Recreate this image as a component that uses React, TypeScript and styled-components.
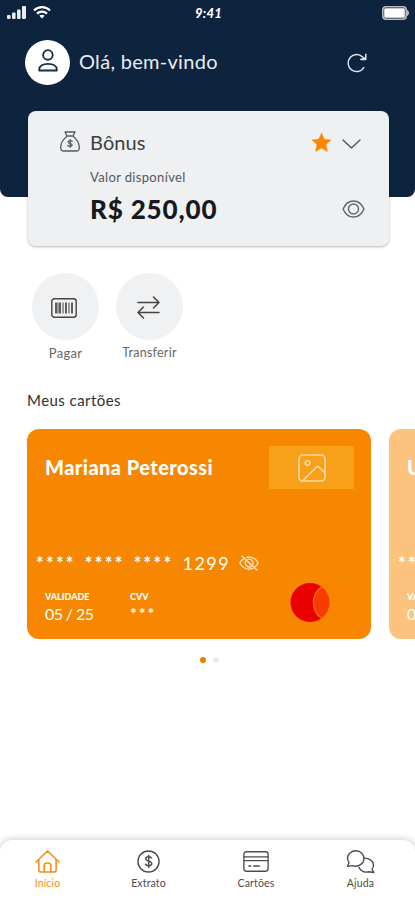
import React from 'react';
import styled, { createGlobalStyle } from 'styled-components';

const Global = createGlobalStyle`
  * { box-sizing: border-box; }
  body { margin: 0; background: #fff; font-family: Lato, "Open Sans", sans-serif; }
  svg { display: block; flex: none; overflow: visible; }
`;

const Screen = styled.main`
  width: 415px; height: 900px; overflow: hidden;
  display: flex; flex-direction: column; background: #fff;
`;
const Header = styled.header`
  height: 197px; flex: none; background: #0d233e; border-radius: 0 0 8px 8px; color: #fff;
`;
const StatusBar = styled.div`
  height: 24px; padding: 0 5px 2px 7px;
  display: grid; grid-template-columns: 1fr auto 1fr; align-items: center;
`;
const Signals = styled.div`display: flex; align-items: center; gap: 7px;`;
const Clock = styled.span`
  font: italic 900 13px/24px Lato, sans-serif; letter-spacing: .3px; padding-top: 1px;
`;
const Battery = styled.div`justify-self: end;`;
const Greeting = styled.div`
  display: flex; align-items: center; height: 45px; margin-top: 16px; padding: 0 48px 0 25px;
`;
const Avatar = styled.div`
  width: 45px; height: 45px; border-radius: 50%; background: #fff;
  display: grid; place-items: center; padding: 0 0 4px 1px; margin-right: 9px;
`;

const Label = styled.span<{ $size: number; $lh?: number; $weight?: number; $color?: string; $track?: number }>`
  font-size: ${p => p.$size}px;
  line-height: ${p => p.$lh ?? p.$size + 4}px;
  font-weight: ${p => p.$weight ?? 400};
  color: ${p => p.$color ?? 'inherit'};
  letter-spacing: ${p => p.$track ?? 0}px;
  white-space: nowrap; display: block;
`;
const Welcome = styled(Label)`padding-bottom: 3px;`;
const Spacer = styled.div`flex: 1;`;

const Bonus = styled.section`
  width: 361px; height: 135px; flex: none; margin: -86px 0 0 28px; padding: 18px 24px 0 32px;
  background: #eef0f2; border-radius: 8px; box-shadow: 0 1px 3px rgba(0,0,0,.28);
  display: grid; grid-template-columns: 30px 1fr; grid-template-rows: 26px 45px 18px; align-content: start;
`;
const BonusRow = styled.div`
  display: flex; align-items: center; grid-column: 2;
`;
const BagWrap = styled.div`padding-top: 2px;`;
const StarWrap = styled.div`margin-right: 11px;`;
const ChevronWrap = styled.div`margin: 3px 4px 0 0;`;

const Actions = styled.section`display: flex; gap: 17px; margin: 27px 0 0 32px;`;
const Action = styled.div`
  width: 67px; display: flex; flex-direction: column; align-items: center; gap: 5px;
`;
const Disc = styled.div`
  width: 67px; height: 67px; border-radius: 50%; background: #f0f1f3; display: grid; place-items: center;
  padding: 2px 3px 0 0;
`;
const SectionTitle = styled.h2`
  margin: 29px 0 0 27px; font-size: 15px; line-height: 20px; font-weight: 400; color: #303030; letter-spacing: .45px;
`;
const Carousel = styled.section`display: flex; gap: 18px; margin: 19px 0 0 27px; flex: none;`;
const Card = styled.article<{ $faded?: boolean }>`
  width: 344px; height: 210px; flex: none; border-radius: 12px; color: #fff;
  background: ${p => (p.$faded ? '#fbc37d' : '#f78600')};
  display: flex; flex-direction: column;
`;
const CardTop = styled.div`
  display: flex; justify-content: space-between; height: 43px; margin: 17px 17px 0 18px;
`;
const Picture = styled.div`
  width: 85px; height: 43px; background: #f9a01b; display: grid; place-items: center;
`;
const NumberRow = styled.div`
  display: flex; align-items: center; gap: 9px; height: 20px; margin: 64px 0 0 9px;
`;
const Stars = styled.span<{ $size?: number; $track?: number }>`
  display: block; font-size: ${p => p.$size ?? 18}px; line-height: 20px; height: 20px;
  letter-spacing: ${p => p.$track ?? 2}px; white-space: nowrap; font-weight: 700;
`;
const StarGroups = styled.div`display: flex; gap: 9px;`;
const CardBottom = styled.div`
  display: flex; height: 40px; margin: 10px 0 0 18px;
`;
const Field = styled.div<{ $width: number }>`width: ${p => p.$width}px; padding-top: 8px;`;
const Dots = styled.div`display: flex; gap: 7px; margin: 18px 0 0 200px;`;
const Dot = styled.i<{ $on?: boolean }>`
  width: 6px; height: 6px; border-radius: 50%; background: ${p => (p.$on ? '#f57c00' : '#eeeeee')};
`;
const Nav = styled.nav`
  height: 60px; margin-top: auto; flex: none; background: #fff; border-radius: 12px 12px 0 0;
  box-shadow: 0 -1px 7px rgba(0,0,0,.2); padding: 9px 4px 0 0;
  display: grid; grid-template-columns: 95px 107px 108px 101px;
`;
const Tab = styled.div<{ $active?: boolean }>`
  display: flex; flex-direction: column; align-items: center;
  color: ${p => (p.$active ? '#f98a16' : '#4c4c4c')};
`;
const TabIcon = styled.div`height: 24px; display: grid; place-items: center; margin-bottom: 3px;`;

const line = { fill: 'none', stroke: 'currentColor', strokeLinecap: 'round', strokeLinejoin: 'round' } as const;

const SignalIcon = () => (
  <svg width="19" height="13" fill="#e8ebef">
    <rect x="0" y="9" width="3.6" height="4" rx="1" /><rect x="5" y="6.5" width="3.6" height="6.5" rx="1" />
    <rect x="10" y="3.5" width="3.6" height="9.5" rx="1" /><rect x="15" y="0" width="4" height="13" rx="1" />
  </svg>
);
const WifiIcon = () => (
  <svg width="18" height="13" viewBox="0 0 18 13" fill="none" stroke="#fff" strokeWidth="2.2">
    <path d="M1 4.5C5.5.1 12.5.1 17 4.5" /><path d="M4 7.6c2.8-2.7 7.2-2.7 10 0" />
    <path d="M6.3 9.7c1.6-1.4 3.8-1.4 5.4 0L9 12.5z" fill="#fff" stroke="none" />
  </svg>
);
const BatteryIcon = () => (
  <svg width="28" height="14" viewBox="0 0 28 14">
    <rect x=".8" y=".8" width="23.4" height="12.4" rx="3.2" fill="none" stroke="#b9bbbd" strokeWidth="1.6" />
    <rect x="2.2" y="2.2" width="20.6" height="9.6" rx="1.2" fill="#fff" />
    <path d="M25.5 4.5q2.5 2.5 0 5z" fill="#b9bbbd" stroke="#b9bbbd" />
  </svg>
);
const UserIcon = () => (
  <svg width="20" height="23" viewBox="0 0 21 24" {...line} stroke="#172b45" strokeWidth="1.9">
    <circle cx="10.4" cy="6.2" r="5" /><path d="M1.3 22.5v-1.2c0-3.600 4-5.800 9.200-5.800s9.200 2.200 9.200 5.800v1.200z" />
  </svg>
);
const RefreshIcon = () => (
  <svg width="20" height="20" viewBox="0 0 20 20" {...line} stroke="#e1e4e8" strokeWidth="1.5">
    <path d="M16.800 14.600A8.500 8.500 0 1 1 15.600 4l2.400 2" /><path d="M18.800 1.200v5.300h-5l5-1.500" />
  </svg>
);
const BagIcon = () => (
  <svg width="20" height="21" viewBox="0 0 20 21" {...line} stroke="#555b60" strokeWidth="1.3">
    <path d="M5 1h10l-2 4H7zM6.5 5.2h7M7 5.2C3.6 7.8.7 11.8.7 16.4c0 2.5 1.2 3.6 3.2 3.6h12.2c2 0 3.2-1.1 3.2-3.6 0-4.6-2.9-8.6-6.3-11.2" />
    <path d="M12.3 10.3c-.8-1-3.9-1.2-4.2.5-.3 2 4.2 1.2 4 3.3-.2 1.7-3.3 1.7-4.4.3M10.2 8.600v7.600" />
  </svg>
);
const StarIcon = () => (
  <svg width="19" height="19" viewBox="0 0 20 20" fill="#ff8500"><path d="M10 0l2.900 6.500 7.100.8-5.300 4.800 1.600 7.400L10 15.900l-6.300 3.600 1.600-7.400L0 7.300l7.100-.8z" stroke="#ff8500" strokeWidth=".5" strokeLinejoin="round" /></svg>
);
const ChevronIcon = () => (
  <svg width="19" height="10" viewBox="0 0 19 10" {...line} stroke="#555" strokeWidth="1.4"><path d="M1 1l8.500 8L18 1" /></svg>
);
const EyeIcon = () => (
  <svg width="23" height="18" viewBox="0 0 24 19" {...line} stroke="#64686c" strokeWidth="1.5">
    <path d="M1 9.500C3.200 4.300 7.200 1 12 1s8.800 3.300 11 8.500C20.800 14.700 16.800 18 12 18S3.200 14.700 1 9.500z" /><circle cx="12" cy="9.500" r="5.300" />
  </svg>
);
const BarcodeIcon = () => (
  <svg width="26" height="20" viewBox="0 0 26 20" {...line} stroke="#454545" strokeWidth="1.4">
    <rect x=".8" y=".8" width="24.400" height="18.400" rx="2.500" />
    <g strokeLinecap="butt"><path d="M5 4.500v11M9 4.500v11M15 4.500v11M21 4.500v11" strokeWidth="1.700" /><path d="M7 4.500v11M12 4.500v11M18 4.500v11" strokeWidth="1" /></g>
  </svg>
);
const SwapIcon = () => (
  <svg width="23" height="23" viewBox="0 0 23 23" {...line} stroke="#444" strokeWidth="1.5">
    <path d="M1 6.500h21M16.500 1l5.500 5.500-5.500 5.500M22 16.500H1M6.500 11L1 16.500 6.500 22" />
  </svg>
);
const ImageIcon = () => (
  <svg width="28" height="28" viewBox="0 0 28 28" {...line} stroke="#fcd8a4" strokeWidth="1.700">
    <rect x="1" y="1" width="26" height="26" rx="3.500" /><circle cx="9.500" cy="9" r="2.300" /><path d="M5 26.500L18.500 13q1.200-1 2.400.1L27 19" />
  </svg>
);
const EyeOffIcon = () => (
  <svg width="20" height="16" viewBox="0 0 21 17" {...line} stroke="#ffe3bd" strokeWidth="1.500">
    <path d="M5.600 3.500C3.600 4.500 2 6.200.8 8.500 3 12.800 6.300 15 10.500 15c1.700 0 3.200-.4 4.500-1M8 2.400c5.400-1.200 9.700 1.400 12.200 6.100-.8 1.500-1.800 2.700-2.900 3.700" />
    <path d="M3 1l16 15M7 6.200a4.500 4.500 0 0 0 6 6M9.200 4.600a4.300 4.300 0 0 1 5.400 5.300M9.500 7.500l3 2.800" />
  </svg>
);
const BrandIcon = () => (
  <svg width="65" height="40" viewBox="0 0 65 40">
    <circle cx="20" cy="19.500" r="19.500" fill="#eb0000" /><circle cx="43" cy="19.500" r="19.500" fill="#fa8300" />
    <path d="M31.500 3.700A19.500 19.500 0 0 1 31.500 35.300 19.500 19.500 0 0 1 31.500 3.700z" fill="#f83c00" />
    <path d="M31.500 3.700A19.500 19.500 0 0 0 31.500 35.300" fill="none" stroke="#fc6e16" strokeWidth="1.300" />
  </svg>
);
const HomeIcon = () => (
  <svg width="25" height="23" viewBox="0 0 26 24" {...line} strokeWidth="1.600">
    <path d="M1 12.500L13 1l12 11.500M4 10v10.500Q4 23 6.500 23h13q2.500 0 2.500-2.500V10M9.500 22.500V16q0-2.500 3.500-2.500t3.500 2.500v6.500" />
  </svg>
);
const MoneyIcon = () => (
  <svg width="23" height="23" viewBox="0 0 24 24" {...line} strokeWidth="1.500">
    <circle cx="12" cy="12" r="11" /><path d="M15.200 8.300c-.7-1.700-6-1.900-6 .8 0 3.200 6.200 1.700 6.200 5 0 2.900-5.300 2.900-6.600.7M12.200 5.600v12.700" />
  </svg>
);
const CardIcon = () => (
  <svg width="26" height="21" viewBox="0 0 27 22" {...line} strokeWidth="1.400">
    <rect x=".8" y=".8" width="25.400" height="20.400" rx="2.500" /><path d="M1 6.200h25M1 10h25M6 15.700h2M11 15.700h6" />
  </svg>
);
const ChatIcon = () => (
  <svg width="29" height="23" viewBox="0 0 30 24" {...line} strokeWidth="1.400">
    <path d="M6.500 16.300c2.700 1 6.300.5 8.600-1 4.200-2.700 4.700-8.500 1.200-12C13.100 0 7.500 0 4 3.100 1 5.800.7 9.500 3 13l-1.600 4z" />
    <path d="M19.300 8.500c4.500-.1 8.700 2.800 9.200 6.600.3 2-.2 3.600-1.500 5.100L29 23.500l-5.200-.8c-4.500 1.300-9-.8-10.400-4.800" />
  </svg>
);

function BankCard({ name, faded }: { name: string; faded?: boolean }) {
  return (
    <Card $faded={faded}>
      <CardTop>
        <Label $size={20} $lh={43} $weight={900} $track={0.42}>{name}</Label>
        <Picture><ImageIcon /></Picture>
      </CardTop>
      <NumberRow>
        <StarGroups><Stars $track={2.3}>****</Stars><Stars $track={2.3}>****</Stars><Stars $track={2.3}>****</Stars></StarGroups>
        <Label $size={18} $lh={20} $track={1.5}>1299</Label>
        <EyeOffIcon />
      </NumberRow>
      <CardBottom>
        <Field $width={85}>
          <Label $size={9} $lh={12} $weight={900}>VALIDADE</Label>
          <Label $size={16} $lh={22} $track={-0.6}>05 / 25</Label>
        </Field>
        <Field $width={160}>
          <Label $size={9} $lh={12} $weight={900}>CVV</Label>
          <Stars $size={16}>***</Stars>
        </Field>
        <BrandIcon />
      </CardBottom>
    </Card>
  );
}

const tabs = [
  { label: 'Início', Icon: HomeIcon },
  { label: 'Extrato', Icon: MoneyIcon },
  { label: 'Cartões', Icon: CardIcon },
  { label: 'Ajuda', Icon: ChatIcon },
];

export default function App() {
  return (
    <Screen>
      <Global />
      <Header>
        <StatusBar>
          <Signals><SignalIcon /><WifiIcon /></Signals>
          <Clock>9:41</Clock>
          <Battery><BatteryIcon /></Battery>
        </StatusBar>
        <Greeting>
          <Avatar><UserIcon /></Avatar>
          <Welcome $size={20} $track={0.3} $color="#e8ecf1">Olá, bem-vindo</Welcome>
          <Spacer />
          <RefreshIcon />
        </Greeting>
      </Header>
      <Bonus>
        <BagWrap><BagIcon /></BagWrap>
        <BonusRow>
          <Label $size={20} $lh={26} $color="#3c4043" $track={0.1}>Bônus</Label>
          <Spacer />
          <StarWrap><StarIcon /></StarWrap>
          <ChevronWrap><ChevronIcon /></ChevronWrap>
        </BonusRow>
        <BonusRow><Label $size={13} $color="#55585b" $track={0.35}>Valor disponível</Label></BonusRow>
        <BonusRow>
          <Label $size={26} $lh={34} $weight={900} $color="#171a1c" $track={0.85}>R$ 250,00</Label>
          <Spacer />
          <EyeIcon />
        </BonusRow>
      </Bonus>
      <Actions>
        <Action><Disc><BarcodeIcon /></Disc><Label $size={13} $lh={16} $color="#666" $track={0.3}>Pagar</Label></Action>
        <Action><Disc><SwapIcon /></Disc><Label $size={12.5} $lh={16} $color="#666" $track={0.25}>Transferir</Label></Action>
      </Actions>
      <SectionTitle>Meus cartões</SectionTitle>
      <Carousel>
        <BankCard name="Mariana Peterossi" />
        <BankCard name="U" faded />
      </Carousel>
      <Dots><Dot $on /><Dot /></Dots>
      <Nav>
        {tabs.map(({ label, Icon }, i) => (
          <Tab key={label} $active={i === 0}>
            <TabIcon><Icon /></TabIcon>
            <Label $size={10.5} $lh={14} $track={0.15}>{label}</Label>
          </Tab>
        ))}
      </Nav>
    </Screen>
  );
}
